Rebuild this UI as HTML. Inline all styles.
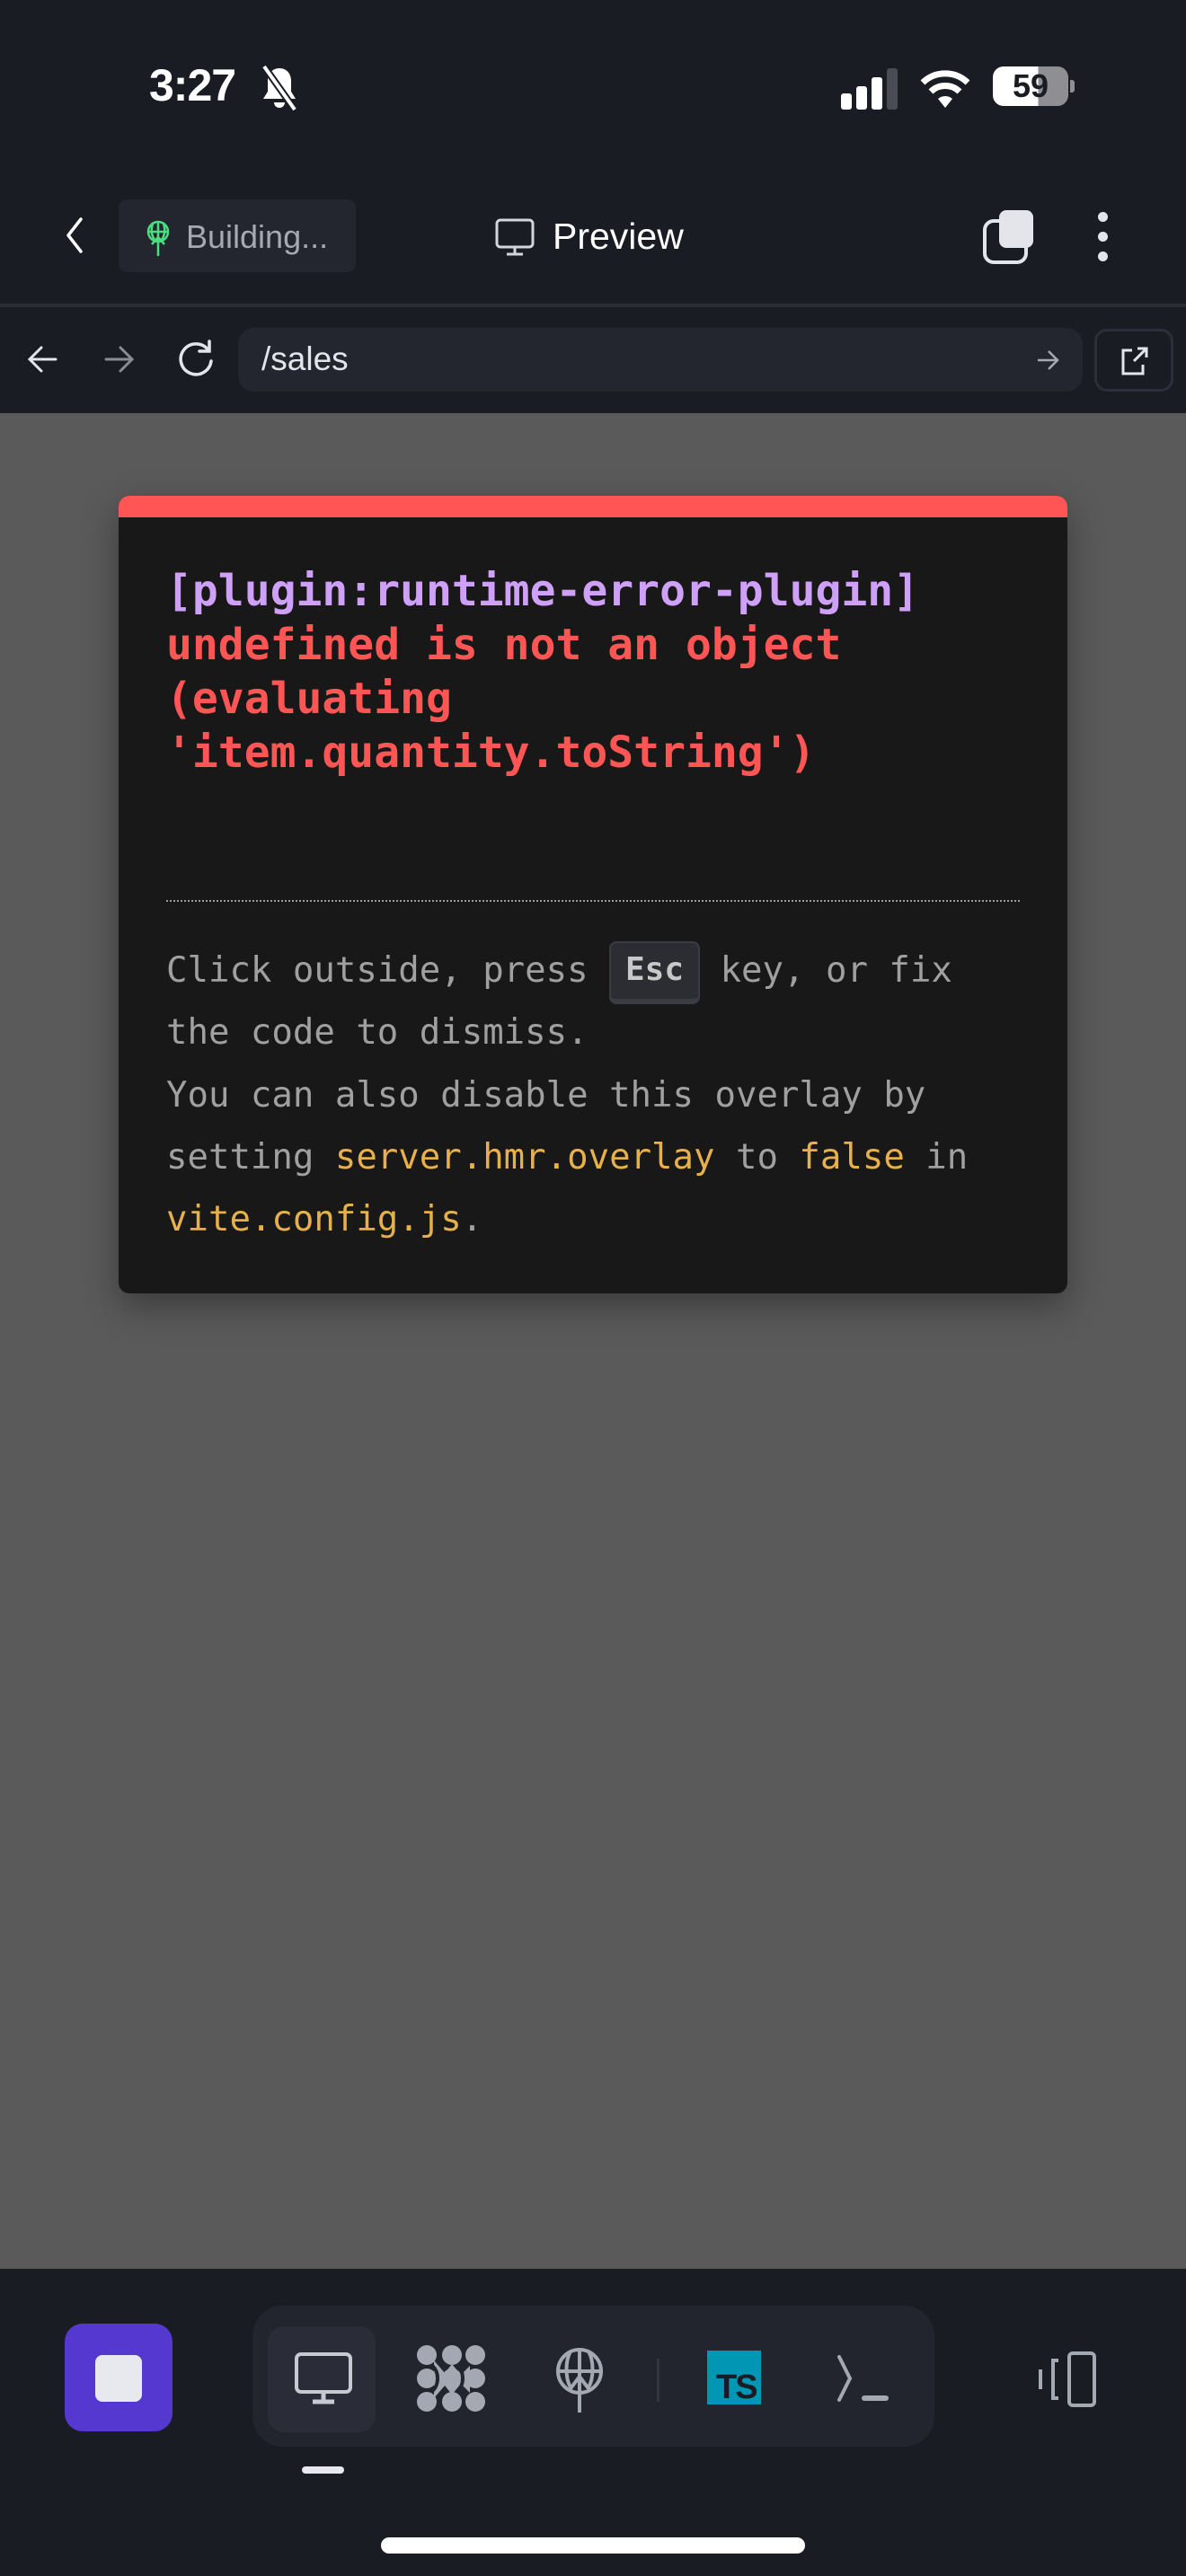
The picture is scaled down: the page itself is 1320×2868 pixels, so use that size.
<!DOCTYPE html>
<html><head><meta charset="utf-8"><style>
*{margin:0;padding:0;box-sizing:border-box}
body{width:1320px;height:2868px;background:#1a1c24;position:relative;overflow:hidden;font-family:"Liberation Sans",sans-serif}
.abs{position:absolute}
.mono{font-family:"DejaVu Sans Mono","Liberation Mono",monospace}
</style></head><body>
<!-- status bar -->
<div class="abs" style="left:166px;top:66px;color:#fff;font-size:50px;font-weight:bold;letter-spacing:-1px">3:27</div>
<svg class="abs" style="left:288px;top:72px" width="46" height="52" viewBox="0 0 46 52"><path d="M23 4c-8 0-13 6-13 14v12l-5 8h36l-5-8V18c0-8-5-14-13-14z" fill="#fff"/><path d="M17 42a6 6 0 0 0 12 0z" fill="#fff"/><path d="M6 2l34 48" stroke="#1a1c24" stroke-width="8"/><path d="M6 2l34 48" stroke="#fff" stroke-width="4"/></svg>
<div class="abs" style="left:936px;top:104px;width:12px;height:18px;background:#fff;border-radius:3px"></div>
<div class="abs" style="left:953px;top:96px;width:12px;height:26px;background:#fff;border-radius:3px"></div>
<div class="abs" style="left:970px;top:86px;width:12px;height:36px;background:#fff;border-radius:3px"></div>
<div class="abs" style="left:987px;top:76px;width:12px;height:46px;background:#4a4c55;border-radius:3px"></div>
<svg class="abs" style="left:1022px;top:72px" width="60" height="50" viewBox="0 0 60 50"><path d="M30 48L22 38a12 12 0 0 1 16 0z" fill="#fff"/><path d="M14 30a23 23 0 0 1 32 0" stroke="#fff" stroke-width="7" fill="none"/><path d="M5 20a36 36 0 0 1 50 0" stroke="#fff" stroke-width="7" fill="none"/></svg>
<div class="abs" style="left:1105px;top:74px;width:84px;height:44px;border-radius:12px;background:linear-gradient(90deg,#fff 0 60%,#8e8e93 60%);color:#1a1c24;font-weight:bold;font-size:36px;text-align:center;line-height:44px">59</div>
<div class="abs" style="left:1191px;top:89px;width:5px;height:14px;background:#8e8e93;border-radius:0 3px 3px 0"></div>
<!-- header -->
<svg class="abs" style="left:68px;top:240px" width="30" height="44" viewBox="0 0 30 44"><path d="M22 4L8 22l14 18" stroke="#fff" stroke-width="3.5" fill="none" stroke-linecap="round" stroke-linejoin="round"/></svg>
<div class="abs" style="left:132px;top:222px;width:264px;height:81px;background:#23262f;border-radius:10px"></div>
<svg class="abs" style="left:160px;top:244px" width="32" height="42" viewBox="0 0 32 42"><circle cx="16" cy="14" r="11" stroke="#4ade80" stroke-width="2.5" fill="none"/><path d="M5 14h22M16 3v38M10 5c-2 6-2 12 2 18M22 5c2 6 2 12-2 18M9 28l7-8 7 8" stroke="#4ade80" stroke-width="2.5" fill="none"/></svg>
<div class="abs" style="left:207px;top:243px;color:#a6a9b2;font-size:36px">Building...</div>
<svg class="abs" style="left:550px;top:242px" width="46" height="44" viewBox="0 0 46 44"><rect x="3" y="3" width="40" height="30" rx="4" stroke="#d4d6dc" stroke-width="3" fill="none"/><path d="M23 33v8M14 41h18" stroke="#d4d6dc" stroke-width="3"/></svg>
<div class="abs" style="left:615px;top:240px;color:#fff;font-size:41px">Preview</div>
<svg class="abs" style="left:1090px;top:230px" width="66" height="66" viewBox="0 0 66 66"><rect x="6" y="16" width="46" height="46" rx="10" stroke="#e4e5ea" stroke-width="4" fill="none"/><rect x="22" y="4" width="38" height="42" rx="8" fill="#e4e5ea"/></svg>
<div class="abs" style="left:1222px;top:236px;width:11px;height:11px;border-radius:50%;background:#e4e5ea"></div>
<div class="abs" style="left:1222px;top:258px;width:11px;height:11px;border-radius:50%;background:#e4e5ea"></div>
<div class="abs" style="left:1222px;top:280px;width:11px;height:11px;border-radius:50%;background:#e4e5ea"></div>
<div class="abs" style="left:0;top:338px;width:1320px;height:4px;background:#2a2d36"></div>
<!-- nav row -->
<svg class="abs" style="left:28px;top:380px" width="40" height="40" viewBox="0 0 40 40"><path d="M34 20H6M18 7L5 20l13 13" stroke="#e4e5ea" stroke-width="3" fill="none" stroke-linecap="round"/></svg>
<svg class="abs" style="left:112px;top:380px" width="40" height="40" viewBox="0 0 40 40"><path d="M6 20h28M22 7l13 13-13 13" stroke="#8a8d96" stroke-width="3" fill="none" stroke-linecap="round"/></svg>
<svg class="abs" style="left:194px;top:376px" width="48" height="48" viewBox="0 0 48 48"><path d="M38 14A17 17 0 1 0 41 26" stroke="#e4e5ea" stroke-width="3.5" fill="none" stroke-linecap="round"/><path d="M39 4v11H28" stroke="#e4e5ea" stroke-width="3.5" fill="none" stroke-linecap="round"/></svg>
<div class="abs" style="left:265px;top:365px;width:940px;height:71px;background:#23262f;border-radius:18px"></div>
<div class="abs" style="left:291px;top:379px;color:#e4e5ea;font-size:37px">/sales</div>
<svg class="abs" style="left:1152px;top:387px" width="28" height="28" viewBox="0 0 28 28"><path d="M3 14h22M15 4l10 10-10 10" stroke="#a6a9b2" stroke-width="2.5" fill="none"/></svg>
<div class="abs" style="left:1218px;top:366px;width:88px;height:70px;border:3px solid #2c2f39;border-radius:14px"></div>
<svg class="abs" style="left:1242px;top:384px" width="40" height="36" viewBox="0 0 40 36"><path d="M18 6H8v26h22V22M20 18L34 4M24 4h10v10" stroke="#e4e5ea" stroke-width="3" fill="none"/></svg>
<!-- gray content -->
<div class="abs" style="left:0;top:460px;width:1320px;height:2066px;background:#5a5a5a"></div>
<div class="abs" style="left:132px;top:552px;width:1056px;height:888px;background:#181818;border-radius:12px;overflow:hidden;box-shadow:0 14px 40px rgba(0,0,0,0.35)">
 <div style="height:24px;background:#ff5555"></div>
</div>
<div class="abs mono" style="left:185px;top:628px;font-size:48px;font-weight:bold;line-height:60px;white-space:pre"><span style="color:#cfa0f7">[plugin:runtime-error-plugin]</span>
<span style="color:#ff5555">undefined is not an object
(evaluating
'item.quantity.toString')</span></div>
<div class="abs" style="left:185px;top:1002px;width:950px;border-top:2px dotted #9a9a9a"></div>
<div class="abs mono" style="left:185px;top:1046px;font-size:39px;line-height:69.3px;color:#a0a0a0;white-space:pre">Click outside, press <span style="display:inline-block;width:100px"></span> key, or fix
the code to dismiss.
You can also disable this overlay by
setting <span style="color:#e6b04c">server.hmr.overlay</span> to <span style="color:#e6b04c">false</span> in
<span style="color:#e6b04c">vite.config.js</span>.</div>
<div class="abs mono" style="left:678px;top:1048px;width:101px;height:70px;background:#2b2d33;border:2px solid #3a3c44;border-bottom-width:6px;border-radius:8px;color:#c8c8c8;font-weight:bold;font-size:36px;text-align:center;line-height:60px">Esc</div>
<!-- bottom bar -->
<div class="abs" style="left:72px;top:2587px;width:120px;height:120px;background:#5438d0;border-radius:20px"></div>
<div class="abs" style="left:106px;top:2622px;width:52px;height:52px;background:#e8e9ee;border-radius:8px"></div>
<div class="abs" style="left:281px;top:2567px;width:759px;height:157px;background:#22252e;border-radius:34px"></div>
<div class="abs" style="left:298px;top:2590px;width:120px;height:118px;background:#2a2d38;border-radius:18px"></div>
<svg class="abs" style="left:326px;top:2617px" width="68" height="62" viewBox="0 0 68 62"><rect x="4" y="4" width="60" height="42" rx="5" stroke="#c8cad2" stroke-width="4" fill="none"/><path d="M34 46v10M22 57h24" stroke="#c8cad2" stroke-width="5"/></svg>
<svg class="abs" style="left:463px;top:2610px" width="80" height="76" viewBox="0 0 80 76"><g fill="#a3a8b3"><circle cx="12" cy="12" r="11"/><circle cx="40" cy="12" r="11"/><circle cx="66" cy="12" r="11"/><circle cx="12" cy="38" r="11"/><circle cx="40" cy="38" r="11"/><circle cx="66" cy="38" r="11"/><circle cx="12" cy="64" r="11"/><circle cx="40" cy="64" r="11"/><circle cx="66" cy="64" r="11"/><path d="M20 18l12 14 8-10 10 12 10-10v30l-10-10-10 12-8-10-12 14z"/></g><g stroke="#22252e" stroke-width="4" fill="none"><path d="M18 24c8 6 8 22 0 28M46 24c8 6 8 22 0 28"/></g></svg>
<svg class="abs" style="left:615px;top:2610px" width="60" height="80" viewBox="0 0 60 80"><circle cx="30" cy="30" r="24" stroke="#a3a8b3" stroke-width="4" fill="none"/><path d="M6 30h48M30 6v70M20 8c-6 10-6 30 0 40M40 8c6 10 6 30 0 40M18 52l12-16 12 16" stroke="#a3a8b3" stroke-width="4" fill="none"/></svg>
<div class="abs" style="left:731px;top:2626px;width:3px;height:48px;background:#33363f"></div>
<div class="abs" style="left:787px;top:2617px;width:60px;height:60px;background:#0096b4"></div>
<div class="abs" style="left:797px;top:2637px;color:#1a1c24;font-size:38px;font-weight:bold;letter-spacing:-2px">TS</div>
<svg class="abs" style="left:928px;top:2620px" width="64" height="56" viewBox="0 0 64 56"><path d="M6 4l12 24-12 24" stroke="#a3a8b3" stroke-width="4" fill="none" stroke-linecap="round"/><path d="M34 50h24" stroke="#a3a8b3" stroke-width="6" stroke-linecap="round"/></svg>
<svg class="abs" style="left:1152px;top:2616px" width="72" height="66" viewBox="0 0 72 66"><rect x="38" y="4" width="28" height="58" rx="4" stroke="#a3a8b3" stroke-width="4" fill="none"/><path d="M26 12h-6v42h6" stroke="#a3a8b3" stroke-width="4" fill="none"/><path d="M6 22v22" stroke="#a3a8b3" stroke-width="4"/></svg>
<div class="abs" style="left:336px;top:2746px;width:47px;height:8px;background:#e8e9ee;border-radius:4px"></div>
<div class="abs" style="left:424px;top:2825px;width:472px;height:18px;background:#fff;border-radius:9px"></div>
</body></html>
